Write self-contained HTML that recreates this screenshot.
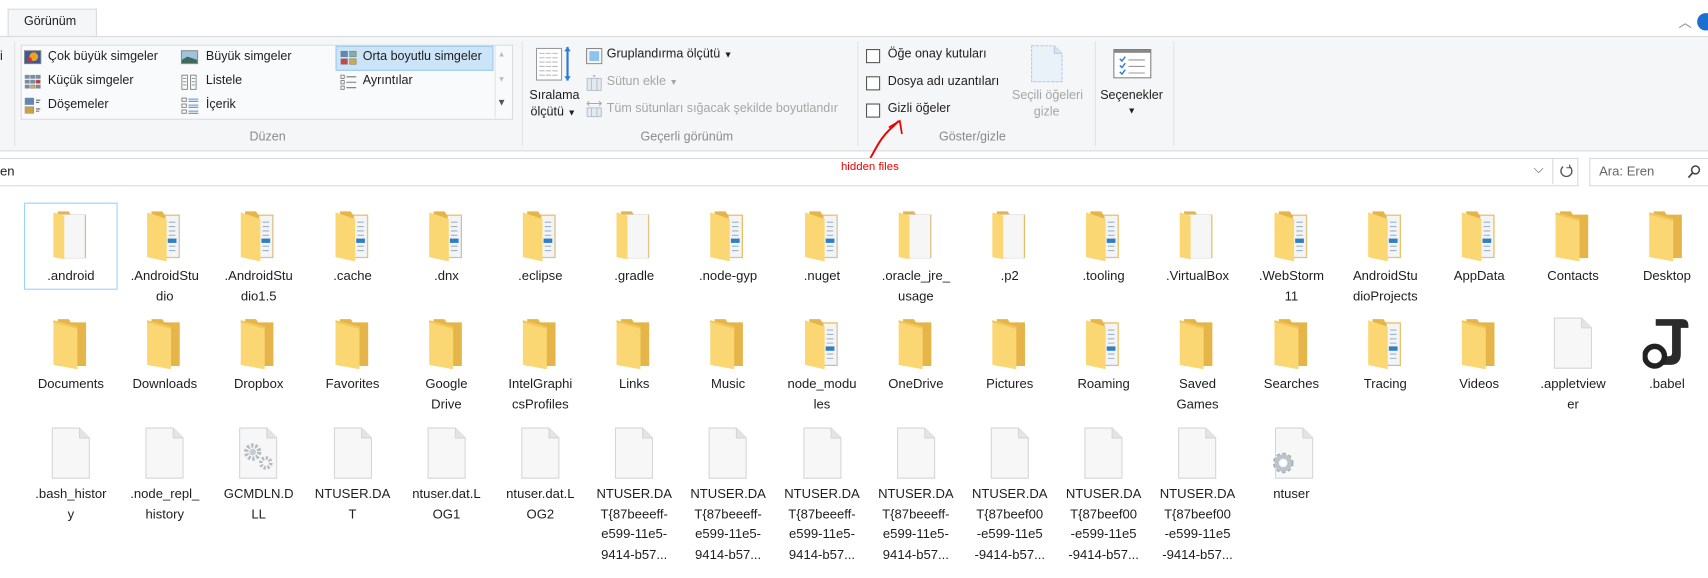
<!DOCTYPE html>
<html><head><meta charset="utf-8"><style>
html,body{margin:0;padding:0;width:1708px;height:578px;overflow:hidden;background:#fff}
#w{position:absolute;left:0;top:0;width:1568px;height:531px;transform:scale(1.0893);transform-origin:0 0;font-family:"Liberation Sans",sans-serif;font-size:11.5px;color:#1e1e1e}
.a{position:absolute;white-space:nowrap}
.g{color:#8a8a8a}
.d{color:#a6a6a6}
.sep{position:absolute;top:38px;width:1px;height:96px;background:#e2e3e4}
.cb{position:absolute;width:11px;height:11px;border:1px solid #555;background:#fff}
.row{position:absolute;left:22px;display:flex}
.cell{width:86.2px;text-align:center;font-size:12px;line-height:18.5px}
.ic{height:54px;display:flex;justify-content:center;align-items:flex-end;margin-bottom:4px}
.ic svg{display:block}
</style></head><body><div id="w">
<svg width="0" height="0" style="position:absolute">
<defs>
<symbol id="fold" viewBox="0 0 36 48">
<path d="M6 2h10l2 3h14v40H6z" fill="#e6b54a"/>
<path d="M2 3l22 6v39L2 44z" fill="#fbd774"/>
<path d="M2 3l22 6v2L2 5z" fill="#f2c75a"/>
</symbol>
<symbol id="foldp" viewBox="0 0 36 48">
<path d="M6 2h10l2 3h14v40H6z" fill="#e6b54a"/>
<rect x="19" y="6" width="12" height="38" fill="#f4f4f4" stroke="#d8d8d8" stroke-width=".5"/>
<path d="M22 12h6M22 16h6M22 20h6M22 24h6M22 34h6M22 38h6" stroke="#9ab4cc" stroke-width="1"/>
<rect x="21" y="27" width="8" height="4" fill="#2f7fc8"/>
<path d="M2 3l18 6v39L2 44z" fill="#fbd774"/>
</symbol>
<symbol id="foldw" viewBox="0 0 36 48">
<path d="M6 2h10l2 3h14v40H6z" fill="#e6b54a"/>
<rect x="9" y="5" width="22" height="40" fill="#f6f6f6" stroke="#d8d8d8" stroke-width=".5"/>
<path d="M2 3l10 3v40L2 44z" fill="#fbd774"/>
</symbol>
<symbol id="file" viewBox="0 0 36 48">
<path d="M1 1h25l9 9v37H1z" fill="#f7f7f7" stroke="#d6d6d6"/>
<path d="M26 1v9h9" fill="#e4e4e4" stroke="#d6d6d6"/>
</symbol>
</defs></svg>

<div class="a" style="left:7px;top:8px;width:80px;height:25px;background:#f5f6f7;border:1px solid #dadbdc;border-bottom:none"></div>
<div class="a" style="left:22px;top:14px;font-size:11.5px">Görünüm</div>
<div class="a" style="left:1541px;top:12px;color:#888;font-size:12px">︿</div>
<div class="a" style="left:1558px;top:12px;width:16px;height:16px;border-radius:50%;background:#1a6fd0"></div>
<div class="a" style="left:0;top:33px;width:1568px;height:104px;background:#f5f6f7;border-top:1px solid #dadbdc;border-bottom:1px solid #dadbdc"></div>
<div class="a" style="left:0;top:46px">i</div>
<div class="sep" style="left:13px"></div>
<div class="a" style="left:19px;top:41px;width:450px;height:67px;border:1px solid #dcdcdc;background:#f9fafb"></div>
<div class="a" style="left:308px;top:42px;width:143px;height:21px;background:#cce4f7;border:1px solid #99c9ef"></div>
<div class="a" style="left:454px;top:42px;width:14px;height:66px;border-left:1px solid #e2e2e2"></div>
<div class="a" style="left:457px;top:47px;color:#bbb;font-size:7px">▲</div>
<div class="a" style="left:457px;top:70px;color:#bbb;font-size:7px">▼</div>
<div class="a" style="left:456px;top:89px;color:#555;font-size:9px">▼</div>
<svg class="a" style="left:22px;top:46px" width="16" height="13"><rect x=".5" y=".5" width="15" height="12" fill="#3a5a9a" stroke="#888"/><circle cx="9" cy="6" r="4" fill="#f0a020"/><rect x="3" y="7" width="4" height="4" fill="#d03030"/></svg>
<div class="a" style="left:44px;top:46px">Çok büyük simgeler</div>
<svg class="a" style="left:22px;top:68px" width="16" height="14"><g fill="#6e8fb0" stroke="#888" stroke-width=".5"><rect x="1" y="1" width="4" height="3"/><rect x="6" y="1" width="4" height="3"/><rect x="11" y="1" width="4" height="3"/><rect x="1" y="5.5" width="4" height="3"/><rect x="6" y="5.5" width="4" height="3"/><rect x="11" y="5.5" width="4" height="3" fill="#c33"/><rect x="1" y="10" width="4" height="3"/><rect x="6" y="10" width="4" height="3" fill="#da3"/><rect x="11" y="10" width="4" height="3"/></g></svg>
<div class="a" style="left:44px;top:68px">Küçük simgeler</div>
<svg class="a" style="left:22px;top:89px" width="16" height="16"><rect x="1" y="1" width="8" height="6" fill="#5d88b8" stroke="#888" stroke-width=".5"/><rect x="1" y="9" width="8" height="6" fill="#c9a24a" stroke="#888" stroke-width=".5"/><path d="M11 3h4M11 5h3M11 11h4M11 13h3" stroke="#666"/></svg>
<div class="a" style="left:44px;top:90px">Döşemeler</div>
<svg class="a" style="left:166px;top:46px" width="16" height="13"><rect x=".5" y=".5" width="15" height="12" fill="#9fc2dd" stroke="#888"/><path d="M1 9l5-3 9 3v3H1z" fill="#3d6a5a"/></svg>
<div class="a" style="left:189px;top:46px">Büyük simgeler</div>
<svg class="a" style="left:166px;top:68px" width="16" height="15"><g fill="#fff" stroke="#777" stroke-width=".8"><rect x="1" y="1" width="5" height="13"/><rect x="9" y="1" width="5" height="13"/></g><path d="M2 4h3M2 7h3M2 10h3M10 4h3M10 7h3M10 10h3" stroke="#8a8"/></svg>
<div class="a" style="left:189px;top:68px">Listele</div>
<svg class="a" style="left:166px;top:89px" width="17" height="16"><g fill="#fff" stroke="#777" stroke-width=".8"><rect x="1" y="1" width="4" height="3"/><rect x="1" y="6.5" width="4" height="3"/><rect x="1" y="12" width="4" height="3"/></g><path d="M7 2h9M7 4h9M7 7.5h9M7 9.5h9M7 13h9M7 15h9" stroke="#5a8fd0"/></svg>
<div class="a" style="left:189px;top:90px">İçerik</div>
<svg class="a" style="left:312px;top:46px" width="16" height="14"><rect x="1" y="1" width="6" height="5" fill="#5d88b8" stroke="#777" stroke-width=".5"/><rect x="9" y="1" width="6" height="5" fill="#8aa" stroke="#777" stroke-width=".5"/><rect x="1" y="8" width="6" height="5" fill="#c44" stroke="#777" stroke-width=".5"/><rect x="9" y="8" width="6" height="5" fill="#ca4" stroke="#777" stroke-width=".5"/></svg>
<div class="a" style="left:333px;top:46px">Orta boyutlu simgeler</div>
<svg class="a" style="left:312px;top:68px" width="16" height="15"><g fill="#fff" stroke="#777" stroke-width=".8"><rect x="1" y="1" width="3" height="3"/><rect x="1" y="6" width="3" height="3"/><rect x="1" y="11" width="3" height="3"/></g><path d="M6 2.5h9M6 7.5h9M6 12.5h9" stroke="#777"/></svg>
<div class="a" style="left:333px;top:68px">Ayrıntılar</div>
<div class="a g" style="left:229px;top:120px">Düzen</div>
<div class="sep" style="left:479px"></div>
<svg class="a" style="left:492px;top:42px" width="34" height="33"><rect x=".5" y="2.5" width="23" height="29" fill="#fff" stroke="#999"/><path d="M3 7h18M3 11h18M3 15h18M3 19h18M3 23h18M3 27h18" stroke="#bbb" stroke-dasharray="5 1"/><path d="M29 1v31" stroke="#2a7bd4" stroke-width="2"/><path d="M26 5l3-4 3 4M26 28l3 4 3-4" fill="#2a7bd4"/></svg>
<div class="a" style="left:486px;top:82px">Sıralama</div>
<div class="a" style="left:487px;top:97px">ölçütü <span style="font-size:8px">▼</span></div>
<svg class="a" style="left:538px;top:44px" width="15" height="15"><rect x=".5" y=".5" width="14" height="14" fill="none" stroke="#888"/><rect x="3" y="3" width="9" height="9" fill="#8cc4f0"/></svg>
<div class="a" style="left:557px;top:44px">Gruplandırma ölçütü <span style="font-size:8px">▼</span></div>
<svg class="a" style="left:538px;top:69px" width="15" height="15"><rect x="1" y="3" width="13" height="11" fill="#e3eaf0" stroke="#b8c4d0"/><path d="M5 3v11M10 3v11" stroke="#b8c4d0"/><path d="M6 0h3l-1.5 2z" fill="#aaa"/></svg>
<div class="a d" style="left:557px;top:69px">Sütun ekle <span style="font-size:8px">▼</span></div>
<svg class="a" style="left:538px;top:92px" width="15" height="16"><path d="M1 3h13M3 1l-2 2 2 2M12 1l2 2-2 2" stroke="#aaa" fill="none"/><rect x="1" y="7" width="13" height="8" fill="#e3eaf0" stroke="#b8c4d0"/><path d="M5 7v8M10 7v8" stroke="#b8c4d0"/></svg>
<div class="a d" style="left:557px;top:94px">Tüm sütunları sığacak şekilde boyutlandır</div>
<div class="a g" style="left:588px;top:120px">Geçerli görünüm</div>
<div class="sep" style="left:787px"></div>
<div class="cb" style="left:795px;top:45px"></div>
<div class="a" style="left:815px;top:44px">Öğe onay kutuları</div>
<div class="cb" style="left:795px;top:70px"></div>
<div class="a" style="left:815px;top:69px">Dosya adı uzantıları</div>
<div class="cb" style="left:795px;top:95px"></div>
<div class="a" style="left:815px;top:94px">Gizli öğeler</div>
<svg class="a" style="left:946px;top:41px" width="30" height="35"><path d="M1 1h21l7 7v26H1z" fill="#e9f1f9" stroke="#b9cde2" stroke-dasharray="3 1"/><path d="M22 1v7h7" fill="#d6e4f2" stroke="#b9cde2"/></svg>
<div class="a d" style="left:929px;top:82px">Seçili öğeleri</div>
<div class="a d" style="left:949px;top:97px">gizle</div>
<div class="a g" style="left:862px;top:120px">Göster/gizle</div>
<div class="sep" style="left:1005px"></div>
<svg class="a" style="left:1022px;top:45px" width="35" height="27"><rect x=".5" y=".5" width="34" height="26" fill="#fff" stroke="#777"/><rect x=".5" y=".5" width="34" height="3" fill="#888"/><path d="M6 9l2 2 3-4M6 15l2 2 3-4M6 21l2 2 3-4" stroke="#2a7bd4" fill="none" stroke-width="1.3"/><path d="M14 10h15M14 16h15M14 22h15" stroke="#999"/></svg>
<div class="a" style="left:1010px;top:82px">Seçenekler</div>
<div class="a" style="left:1035px;top:97px;font-size:8px">▼</div>
<div class="sep" style="left:1077px"></div>
<svg class="a" style="left:790px;top:104px" width="50" height="44"><path d="M9 41C14 33 18 22 30 12l5-5" stroke="#e00" stroke-width="1.8" fill="none"/><path d="M26 13l10-6 2 12" stroke="#e00" stroke-width="1.6" fill="none"/></svg>
<div class="a" style="left:772px;top:147px;color:#e00;font-size:10.5px">hidden files</div>
<div class="a" style="left:0;top:145px;width:1448px;height:24px;border-top:1px solid #d9d9d9;border-bottom:1px solid #d9d9d9;border-right:1px solid #d9d9d9"></div>
<div class="a" style="left:0;top:150px;font-size:12px">en</div>
<div class="a" style="left:1408px;top:148px;color:#555;font-size:12px">⌵</div>
<div class="a" style="left:1425px;top:146px;width:1px;height:23px;background:#d9d9d9"></div>
<svg class="a" style="left:1431px;top:150px" width="14" height="14"><path d="M4 3A5 5 0 1 0 10 3" stroke="#555" stroke-width="1.3" fill="none"/><path d="M10 1v3h-3" stroke="#555" fill="none"/></svg>
<div class="a" style="left:1459px;top:145px;width:120px;height:24px;border:1px solid #d9d9d9;border-right:none"></div>
<div class="a" style="left:1468px;top:150px;color:#666;font-size:12px">Ara: Eren</div>
<svg class="a" style="left:1549px;top:151px" width="13" height="13"><circle cx="7.5" cy="5" r="3.6" stroke="#444" stroke-width="1.4" fill="none"/><path d="M5 7.5L1 12" stroke="#444" stroke-width="1.6"/></svg>
<div class="a" style="left:22px;top:186px;width:84px;height:78px;border:1px solid #99d1ff"></div>

<div class="row" style="top:186px">
<div class="cell"><div class="ic"><svg width="36" height="48"><use href="#foldw"/></svg></div>.android</div>
<div class="cell"><div class="ic"><svg width="36" height="48"><use href="#foldp"/></svg></div>.AndroidStu<br>dio</div>
<div class="cell"><div class="ic"><svg width="36" height="48"><use href="#foldp"/></svg></div>.AndroidStu<br>dio1.5</div>
<div class="cell"><div class="ic"><svg width="36" height="48"><use href="#foldp"/></svg></div>.cache</div>
<div class="cell"><div class="ic"><svg width="36" height="48"><use href="#foldp"/></svg></div>.dnx</div>
<div class="cell"><div class="ic"><svg width="36" height="48"><use href="#foldp"/></svg></div>.eclipse</div>
<div class="cell"><div class="ic"><svg width="36" height="48"><use href="#foldw"/></svg></div>.gradle</div>
<div class="cell"><div class="ic"><svg width="36" height="48"><use href="#foldp"/></svg></div>.node-gyp</div>
<div class="cell"><div class="ic"><svg width="36" height="48"><use href="#foldp"/></svg></div>.nuget</div>
<div class="cell"><div class="ic"><svg width="36" height="48"><use href="#foldw"/></svg></div>.oracle_jre_<br>usage</div>
<div class="cell"><div class="ic"><svg width="36" height="48"><use href="#foldw"/></svg></div>.p2</div>
<div class="cell"><div class="ic"><svg width="36" height="48"><use href="#foldp"/></svg></div>.tooling</div>
<div class="cell"><div class="ic"><svg width="36" height="48"><use href="#foldw"/></svg></div>.VirtualBox</div>
<div class="cell"><div class="ic"><svg width="36" height="48"><use href="#foldp"/></svg></div>.WebStorm<br>11</div>
<div class="cell"><div class="ic"><svg width="36" height="48"><use href="#foldp"/></svg></div>AndroidStu<br>dioProjects</div>
<div class="cell"><div class="ic"><svg width="36" height="48"><use href="#foldp"/></svg></div>AppData</div>
<div class="cell"><div class="ic"><svg width="36" height="48"><use href="#fold"/></svg></div>Contacts</div>
<div class="cell"><div class="ic"><svg width="36" height="48"><use href="#fold"/></svg></div>Desktop</div>
</div>

<div class="row" style="top:285px">
<div class="cell"><div class="ic"><svg width="36" height="48"><use href="#fold"/></svg></div>Documents</div>
<div class="cell"><div class="ic"><svg width="36" height="48"><use href="#fold"/></svg></div>Downloads</div>
<div class="cell"><div class="ic"><svg width="36" height="48"><use href="#fold"/></svg></div>Dropbox</div>
<div class="cell"><div class="ic"><svg width="36" height="48"><use href="#fold"/></svg></div>Favorites</div>
<div class="cell"><div class="ic"><svg width="36" height="48"><use href="#fold"/></svg></div>Google<br>Drive</div>
<div class="cell"><div class="ic"><svg width="36" height="48"><use href="#fold"/></svg></div>IntelGraphi<br>csProfiles</div>
<div class="cell"><div class="ic"><svg width="36" height="48"><use href="#fold"/></svg></div>Links</div>
<div class="cell"><div class="ic"><svg width="36" height="48"><use href="#fold"/></svg></div>Music</div>
<div class="cell"><div class="ic"><svg width="36" height="48"><use href="#foldp"/></svg></div>node_modu<br>les</div>
<div class="cell"><div class="ic"><svg width="36" height="48"><use href="#fold"/></svg></div>OneDrive</div>
<div class="cell"><div class="ic"><svg width="36" height="48"><use href="#fold"/></svg></div>Pictures</div>
<div class="cell"><div class="ic"><svg width="36" height="48"><use href="#foldp"/></svg></div>Roaming</div>
<div class="cell"><div class="ic"><svg width="36" height="48"><use href="#fold"/></svg></div>Saved<br>Games</div>
<div class="cell"><div class="ic"><svg width="36" height="48"><use href="#fold"/></svg></div>Searches</div>
<div class="cell"><div class="ic"><svg width="36" height="48"><use href="#foldp"/></svg></div>Tracing</div>
<div class="cell"><div class="ic"><svg width="36" height="48"><use href="#fold"/></svg></div>Videos</div>
<div class="cell"><div class="ic"><svg width="36" height="48"><use href="#file"/></svg></div>.appletview<br>er</div>
<div class="cell"><div class="ic"><svg width="44" height="52" viewBox="0 0 44 52"><path d="M12 6h24q6 0 6 6v2h-7v24q0 10-10 10h-7v-8h6q3 0 3-3V12H12z" fill="#2b2b2b"/><circle cx="11" cy="40" r="9" fill="none" stroke="#222" stroke-width="5"/></svg></div>.babel</div>
</div>

<div class="row" style="top:386px">
<div class="cell"><div class="ic"><svg width="36" height="48"><use href="#file"/></svg></div>.bash_histor<br>y</div>
<div class="cell"><div class="ic"><svg width="36" height="48"><use href="#file"/></svg></div>.node_repl_<br>history</div>
<div class="cell"><div class="ic"><svg width="36" height="48"><use href="#file"/><circle cx="13" cy="23" r="6" fill="none" stroke="#b4bcc4" stroke-width="4" stroke-dasharray="2.2 1.6"/><circle cx="13" cy="23" r="3" fill="#c4ccd4"/><circle cx="25" cy="33" r="4.5" fill="none" stroke="#b4bcc4" stroke-width="3.5" stroke-dasharray="2 1.5"/></svg></div>GCMDLN.D<br>LL</div>
<div class="cell"><div class="ic"><svg width="36" height="48"><use href="#file"/></svg></div>NTUSER.DA<br>T</div>
<div class="cell"><div class="ic"><svg width="36" height="48"><use href="#file"/></svg></div>ntuser.dat.L<br>OG1</div>
<div class="cell"><div class="ic"><svg width="36" height="48"><use href="#file"/></svg></div>ntuser.dat.L<br>OG2</div>
<div class="cell"><div class="ic"><svg width="36" height="48"><use href="#file"/></svg></div>NTUSER.DA<br>T{87beeeff-<br>e599-11e5-<br>9414-b57...</div>
<div class="cell"><div class="ic"><svg width="36" height="48"><use href="#file"/></svg></div>NTUSER.DA<br>T{87beeeff-<br>e599-11e5-<br>9414-b57...</div>
<div class="cell"><div class="ic"><svg width="36" height="48"><use href="#file"/></svg></div>NTUSER.DA<br>T{87beeeff-<br>e599-11e5-<br>9414-b57...</div>
<div class="cell"><div class="ic"><svg width="36" height="48"><use href="#file"/></svg></div>NTUSER.DA<br>T{87beeeff-<br>e599-11e5-<br>9414-b57...</div>
<div class="cell"><div class="ic"><svg width="36" height="48"><use href="#file"/></svg></div>NTUSER.DA<br>T{87beef00<br>-e599-11e5<br>-9414-b57...</div>
<div class="cell"><div class="ic"><svg width="36" height="48"><use href="#file"/></svg></div>NTUSER.DA<br>T{87beef00<br>-e599-11e5<br>-9414-b57...</div>
<div class="cell"><div class="ic"><svg width="36" height="48"><use href="#file"/></svg></div>NTUSER.DA<br>T{87beef00<br>-e599-11e5<br>-9414-b57...</div>
<div class="cell"><div class="ic"><svg width="40" height="48" viewBox="0 0 40 48"><g transform="translate(4 0)"><use href="#file" width="36" height="48"/></g><circle cx="12" cy="33" r="7" fill="none" stroke="#a9b1b9" stroke-width="5" stroke-dasharray="2.6 2"/><circle cx="12" cy="33" r="6" fill="none" stroke="#bcc3ca" stroke-width="4"/><circle cx="12" cy="33" r="2.5" fill="#fff"/></svg></div>ntuser</div>
</div>
</div></body></html>
